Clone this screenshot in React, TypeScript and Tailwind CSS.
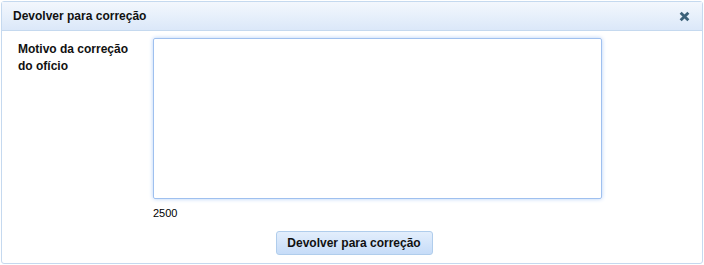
export default function App() {
  return (
    <div className="w-[704px] h-[265px] bg-white p-px" style={{ fontFamily: '"Liberation Sans", Arial, sans-serif' }}>
      <div className="w-[702px] h-[263px] border border-[#c5d9ef] rounded-[3px] flex flex-col bg-white">
        <div className="h-[29px] flex items-center justify-between pl-[11px] pr-[12px] border-b border-[#c5d9ef] bg-gradient-to-b from-[#f3f7fd] to-[#dbe8f9]">
          <span className="text-[12px] font-bold text-[#111]">Devolver para correção</span>
          <svg width="11" height="11" viewBox="0 0 10 10" className="mt-[1px]">
            <path d="M1.5 1.5 L8.5 8.5 M8.5 1.5 L1.5 8.5" stroke="#3c6179" strokeWidth="2.6" strokeLinecap="butt" />
          </svg>
        </div>
        <div className="flex pt-[7px] pl-[16px]">
          <div className="w-[135px] text-[12px] font-bold text-[#111] leading-[17px] pt-[3px]">
            Motivo da correção
            <br />
            do ofício
          </div>
          <div className="flex flex-col">
            <textarea className="w-[449px] h-[161px] border border-[#9fc0ef] rounded-[2px] shadow-[0_0_4px_#b5d0f7] outline-none resize-none" />
            <span className="text-[11px] text-black mt-[8px] leading-[13px]">2500</span>
          </div>
        </div>
        <div className="flex justify-center mt-[11px] pl-[4px]">
          <button className="w-[157px] h-[24px] border border-[#b0cdec] rounded-[3px] bg-gradient-to-b from-[#e3eefc] to-[#c6dcf8] text-[12px] font-bold text-[#111]">
            Devolver para correção
          </button>
        </div>
      </div>
    </div>
  );
}
